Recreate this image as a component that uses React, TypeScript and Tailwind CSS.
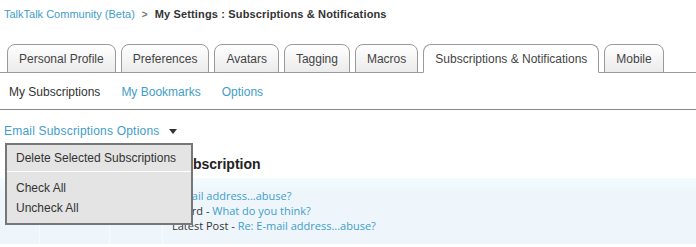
import React from "react";

const tabs = [
  "Personal Profile",
  "Preferences",
  "Avatars",
  "Tagging",
  "Macros",
  "Subscriptions & Notifications",
  "Mobile",
];

export default function App() {
  return (
    <div className="w-[696px] h-[247px] overflow-hidden bg-white text-[#333] font-['Liberation_Sans',Arial,sans-serif]">
      {/* Breadcrumb */}
      <div className="flex items-center h-[28px] pl-[4px] text-[11px]">
        <a className="text-[#3f9dca]">TalkTalk Community (Beta)</a>
        <span className="mx-[7px] text-[#777] font-bold text-[10px]">&gt;</span>
        <span className="font-bold text-[#333] tracking-[0.15px]">My Settings : Subscriptions &amp; Notifications</span>
      </div>

      {/* Tabs */}
      <div className="flex items-end gap-[5px] pl-[7px] mt-[16px] border-b border-[#9a9a9a] h-[29px]">
        {tabs.map((t) => {
          const active = t === "Subscriptions & Notifications";
          return (
            <div
              key={t}
              className={
                active
                  ? "-mb-px h-[29px] px-[11px] flex items-center border border-[#9a9a9a] border-b-white rounded-t-[8px] bg-white text-[12px] text-[#444]"
                  : "-mb-px h-[29px] px-[11px] flex items-center border border-[#9a9a9a] rounded-t-[8px] bg-gradient-to-b from-white to-[#ebebeb] text-[12px] text-[#444]"
              }
            >
              {t}
            </div>
          );
        })}
      </div>

      {/* Sub tabs */}
      <div className="flex items-center gap-[21px] h-[37px] pl-[9px] pt-[2px] text-[12px] border-b border-[#8a8a8a]">
        <span className="text-[#333]">My Subscriptions</span>
        <a className="text-[#3f9dca]">My Bookmarks</a>
        <a className="text-[#3f9dca]">Options</a>
      </div>

      {/* Options dropdown */}
      <div className="relative">
        <div className="flex items-center h-[41px] pl-[4px] text-[12px] text-[#3f9dca] tracking-[0.2px]">
          Email Subscriptions Options
          <svg width="8" height="5" viewBox="0 0 8 5" className="ml-[10px] mt-[1px]">
            <path d="M0 0 L8 0 L4 5 Z" fill="#333" />
          </svg>
        </div>

        <div className="pl-[175px] h-[27px] flex items-start">
          <h2 className="text-[14px] font-bold text-[#222] leading-[26px]">Subscription</h2>
        </div>

        <div className="h-[66px] bg-gradient-to-b from-[#f2fcfe] to-[#eef6fc] to-[20%] flex">
          <div className="w-[40px] border-r border-[#f6fbfe]" />
          <div className="w-[70px] border-r border-[#f6fbfe]" />
          <div className="w-[53px] border-r border-[#f6fbfe]" />
          <div className="pl-[9px] pt-[10px] text-[11px] leading-[15px] font-['Open_Sans',sans-serif] text-[#333]">
            <div className="text-[#3f9dca]">E-mail address...abuse?</div>
            <div>
              Board - <span className="text-[#3f9dca]">What do you think?</span>
            </div>
            <div>
              Latest Post - <span className="text-[#3f9dca]">Re: E-mail address...abuse?</span>
            </div>
          </div>
        </div>

        <div className="absolute left-[5px] top-[33px] w-[188px] h-[82px] bg-[#e4e4e4] border-2 border-[#777] text-[12px] text-[#333]">
          <div className="h-[27px] flex items-center pl-[9px] border-b border-white">
            Delete Selected Subscriptions
          </div>
          <div className="pt-[6px] pl-[9px] leading-[20px]">
            <div>Check All</div>
            <div>Uncheck All</div>
          </div>
        </div>
      </div>
    </div>
  );
}
